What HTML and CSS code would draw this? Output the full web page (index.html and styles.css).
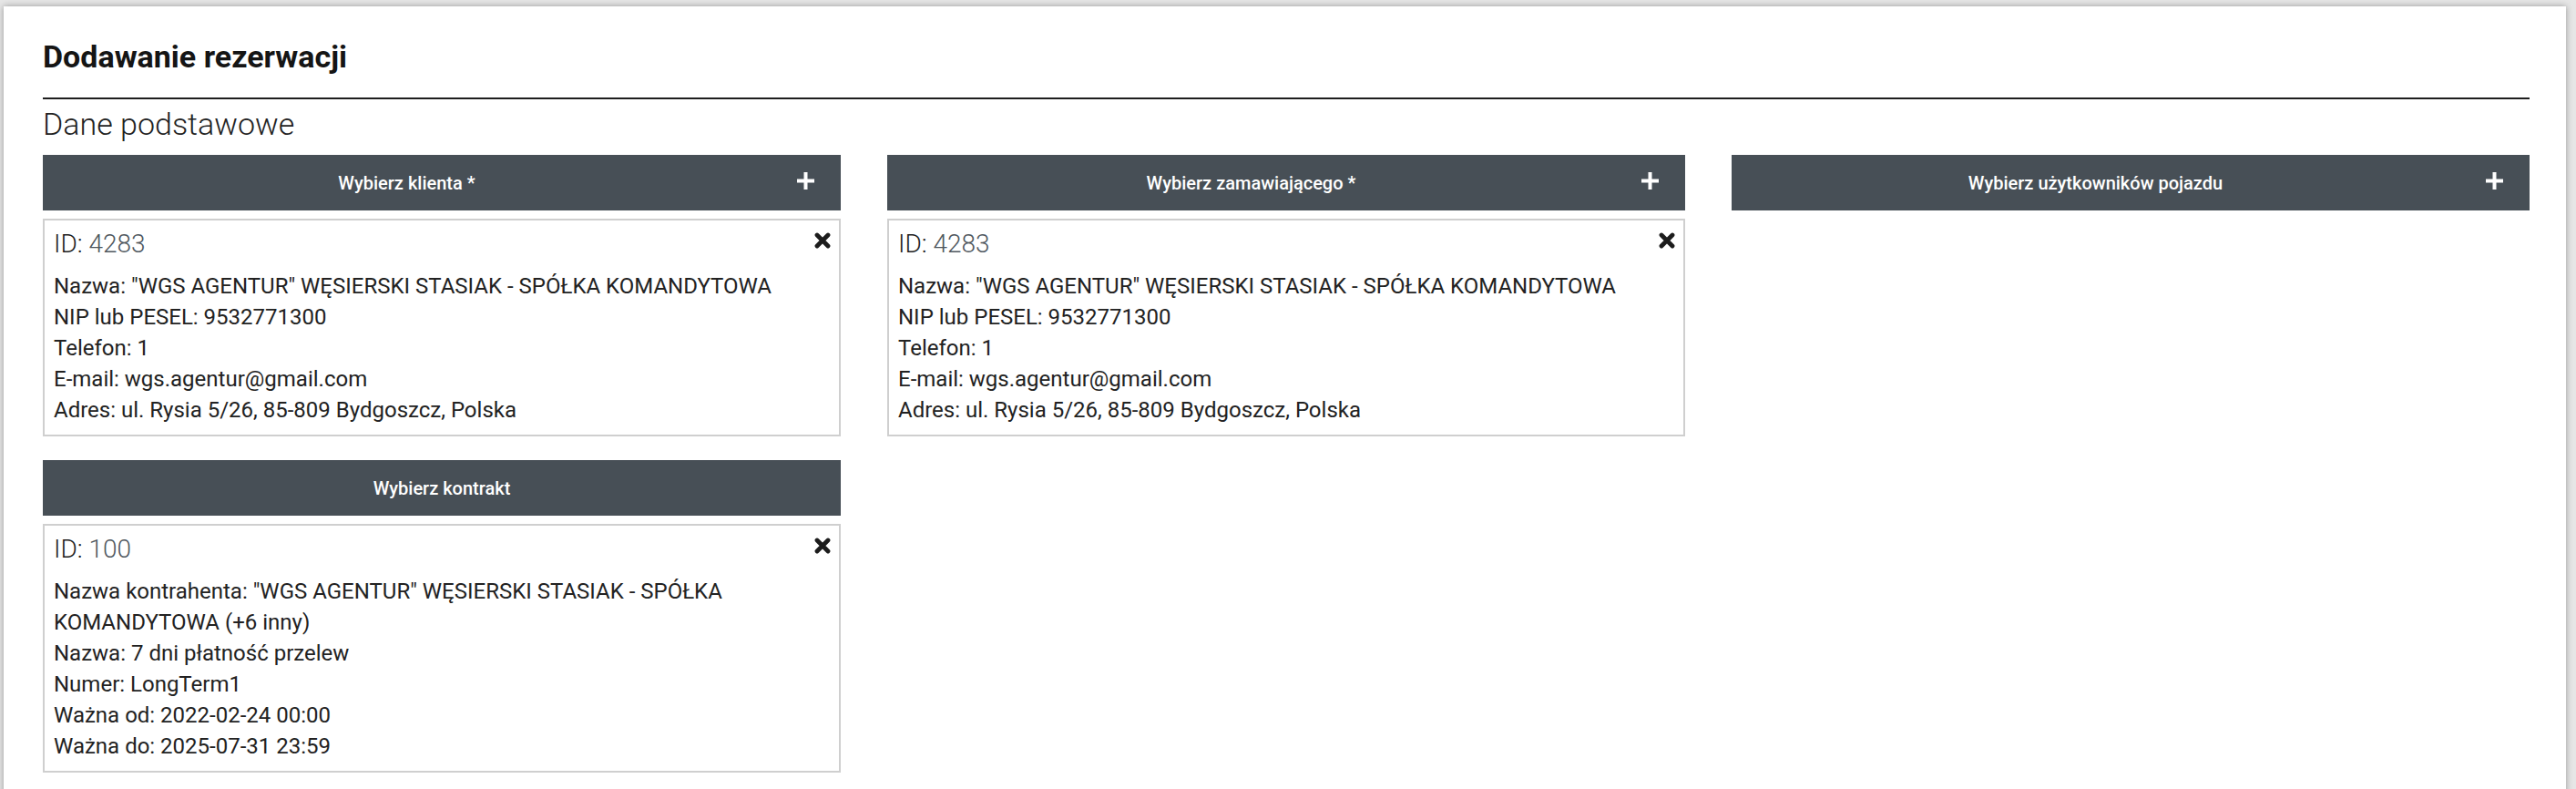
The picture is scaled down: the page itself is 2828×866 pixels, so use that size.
FILE: index.html
```html
<!DOCTYPE html>
<html lang="pl">
<head>
<meta charset="utf-8">
<title>Dodawanie rezerwacji</title>
<link rel="stylesheet" href="styles.css">
</head>
<body>
<div class="page">
  <div class="card">
    <h1 class="title">Dodawanie rezerwacji</h1>
    <hr class="divider">
    <h2 class="subtitle">Dane podstawowe</h2>
    <div class="grid">
      <section class="picker">
        <div class="bar">
          <span class="bar-label">Wybierz klienta *</span>
          <button class="bar-btn" type="button" aria-label="Dodaj">
            <svg width="21" height="21" viewBox="0 0 21 21"><path d="M10.5 1v19M1 10.5h19" stroke="#fff" stroke-width="4" fill="none"/></svg>
          </button>
        </div>
        <div class="item">
          <div class="item-head">
            <h4 class="item-id">ID: <span class="id-num">4283</span></h4>
            <svg class="close" width="18" height="18" viewBox="0 0 18 18"><path d="M3 3l12 12M15 3L3 15" stroke="#1c1c1c" stroke-width="4.8" stroke-linecap="round" fill="none"/></svg>
          </div>
          <div class="line">Nazwa: "WGS AGENTUR" WĘSIERSKI STASIAK - SPÓŁKA KOMANDYTOWA</div>
          <div class="line">NIP lub PESEL: 9532771300</div>
          <div class="line">Telefon: 1</div>
          <div class="line">E-mail: wgs.agentur@gmail.com</div>
          <div class="line">Adres: ul. Rysia 5/26, 85-809 Bydgoszcz, Polska</div>
        </div>
      </section>
      <section class="picker">
        <div class="bar">
          <span class="bar-label">Wybierz zamawiającego *</span>
          <button class="bar-btn" type="button" aria-label="Dodaj">
            <svg width="21" height="21" viewBox="0 0 21 21"><path d="M10.5 1v19M1 10.5h19" stroke="#fff" stroke-width="4" fill="none"/></svg>
          </button>
        </div>
        <div class="item">
          <div class="item-head">
            <h4 class="item-id">ID: <span class="id-num">4283</span></h4>
            <svg class="close" width="18" height="18" viewBox="0 0 18 18"><path d="M3 3l12 12M15 3L3 15" stroke="#1c1c1c" stroke-width="4.8" stroke-linecap="round" fill="none"/></svg>
          </div>
          <div class="line">Nazwa: "WGS AGENTUR" WĘSIERSKI STASIAK - SPÓŁKA KOMANDYTOWA</div>
          <div class="line">NIP lub PESEL: 9532771300</div>
          <div class="line">Telefon: 1</div>
          <div class="line">E-mail: wgs.agentur@gmail.com</div>
          <div class="line">Adres: ul. Rysia 5/26, 85-809 Bydgoszcz, Polska</div>
        </div>
      </section>
      <section class="picker">
        <div class="bar">
          <span class="bar-label">Wybierz użytkowników pojazdu</span>
          <button class="bar-btn" type="button" aria-label="Dodaj">
            <svg width="21" height="21" viewBox="0 0 21 21"><path d="M10.5 1v19M1 10.5h19" stroke="#fff" stroke-width="4" fill="none"/></svg>
          </button>
        </div>
      </section>
      <section class="picker">
        <div class="bar">
          <span class="bar-label">Wybierz kontrakt</span>
        </div>
        <div class="item">
          <div class="item-head">
            <h4 class="item-id">ID: <span class="id-num">100</span></h4>
            <svg class="close" width="18" height="18" viewBox="0 0 18 18"><path d="M3 3l12 12M15 3L3 15" stroke="#1c1c1c" stroke-width="4.8" stroke-linecap="round" fill="none"/></svg>
          </div>
          <div class="line">Nazwa kontrahenta: "WGS AGENTUR" WĘSIERSKI STASIAK - SPÓŁKA KOMANDYTOWA (+6 inny)</div>
          <div class="line">Nazwa: 7 dni płatność przelew</div>
          <div class="line">Numer: LongTerm1</div>
          <div class="line">Ważna od: 2022-02-24 00:00</div>
          <div class="line">Ważna do: 2025-07-31 23:59</div>
        </div>
      </section>
    </div>
  </div>
</div>
</body>
</html>
```

FILE: styles.css
```css
html, body {
  margin: 0;
  padding: 0;
}

body {
  background: #e6e6e6;
  font-family: Roboto, "Liberation Sans", Arial, sans-serif;
  color: #222;
  overflow: hidden;
}

.page {
  padding: 7px 11px 0 4px;
}

.card {
  background: #fff;
  box-shadow: 0 0 7px rgba(0, 0, 0, 0.35);
  padding: 35px 40px 60px 43px;
  min-height: 900px;
}

.title {
  margin: 0;
  font-size: 34px;
  line-height: 40px;
  font-weight: 700;
  color: #151515;
}

.divider {
  margin: 25px 0 0 0;
  border: 0;
  height: 2px;
  background: #1e1e1e;
}

.subtitle {
  margin: 7px 0 0 0;
  font-size: 34px;
  line-height: 40px;
  font-weight: 300;
  color: #222;
}

.grid {
  margin-top: 14px;
  display: grid;
  grid-template-columns: repeat(3, 1fr);
  column-gap: 51px;
  row-gap: 26px;
  align-items: start;
}

.picker {
  display: flex;
  flex-direction: column;
  gap: 9px;
}

.bar {
  height: 61px;
  background: #474f56;
  color: #fff;
  display: flex;
  align-items: center;
}

.bar-label {
  flex: 1;
  text-align: center;
  font-size: 20px;
  font-weight: 500;
}

.bar-btn {
  width: 77px;
  height: 61px;
  border: 0;
  padding: 0 0 5px 0;
  background: transparent;
  display: flex;
  align-items: center;
  justify-content: center;
}

.item {
  border: 2px solid #cfcfcf;
  padding: 9px 10px 10px 10px;
}

.item-head {
  display: flex;
  justify-content: space-between;
  align-items: flex-start;
  margin-bottom: 12px;
}

.item-id {
  margin: 0;
  font-size: 28px;
  line-height: 34px;
  font-weight: 300;
  color: #1e1e1e;
}

.id-num {
  color: #4f575e;
}

.close {
  margin-top: 4px;
  margin-right: -1px;
}

.line {
  font-size: 24px;
  line-height: 34px;
  color: #222;
}
```
